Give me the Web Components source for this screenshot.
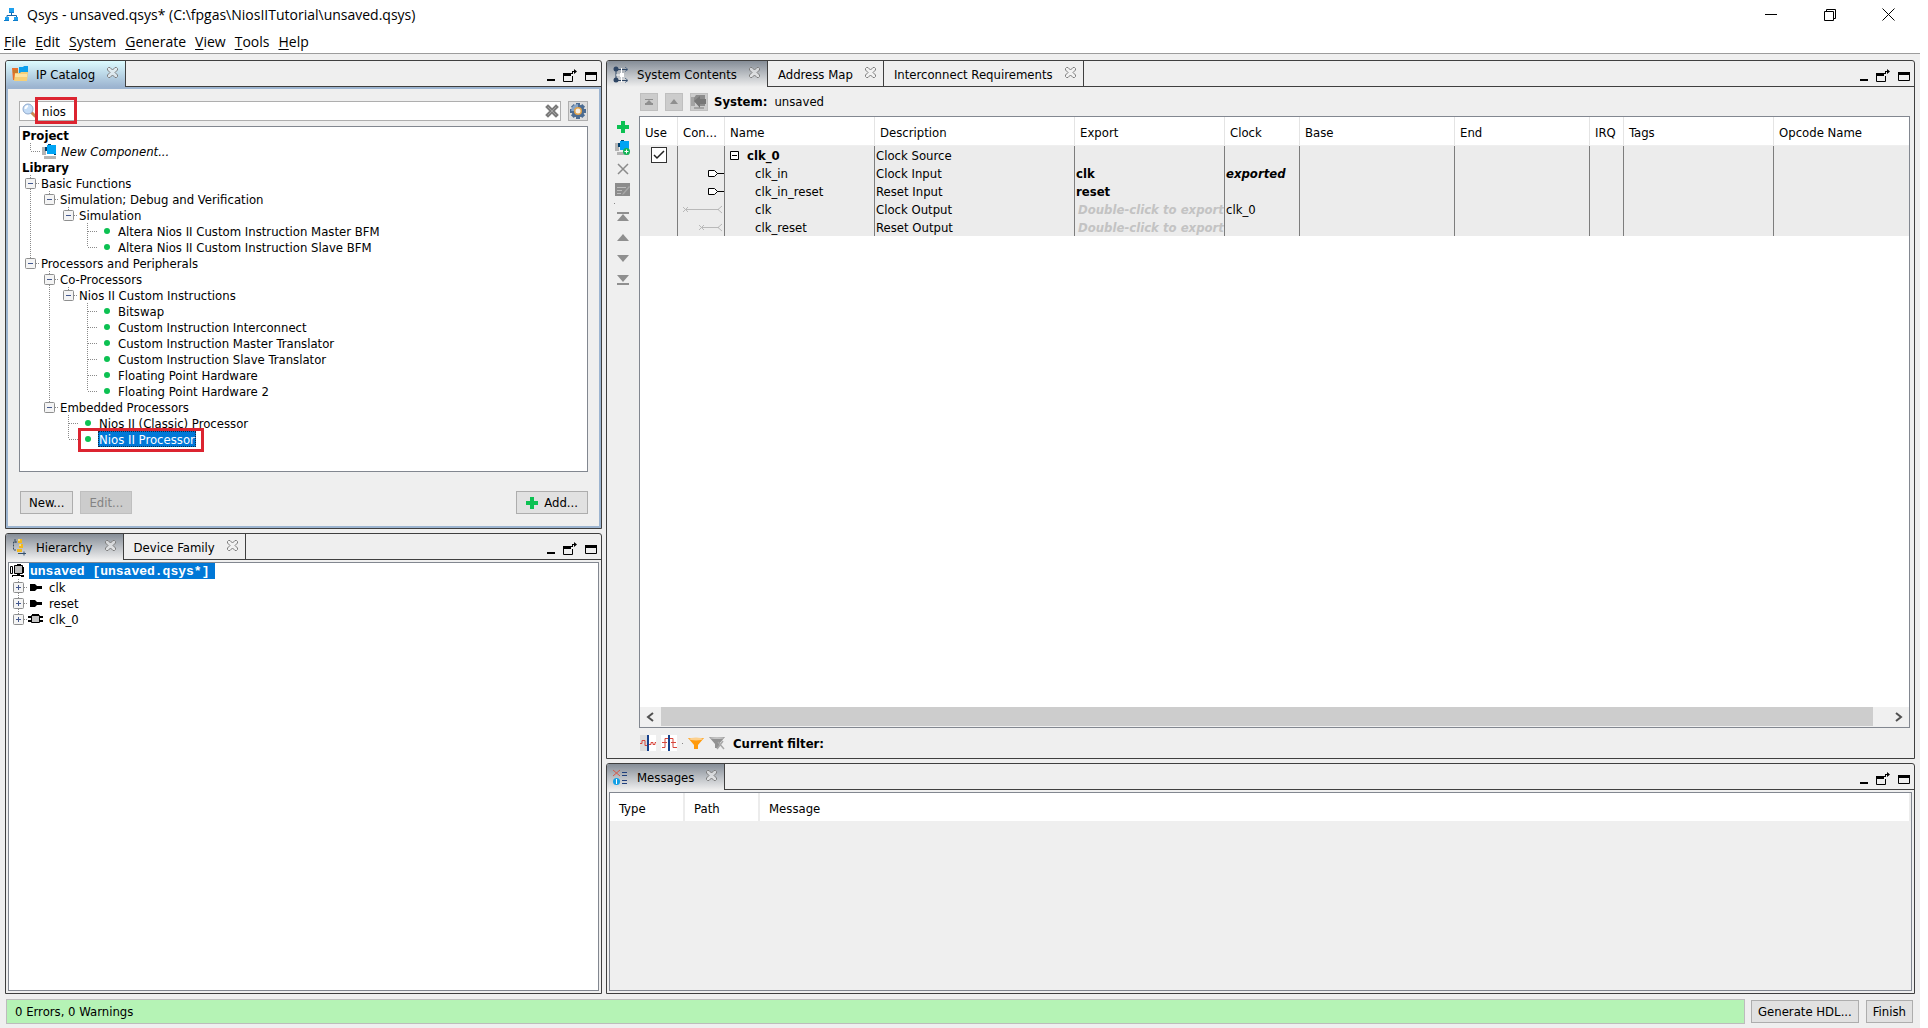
<!DOCTYPE html>
<html lang="en">
<head>
<meta charset="utf-8">
<title>Qsys - unsaved.qsys*</title>
<style>
html,body{height:100%}
body{margin:0;padding-right:8px;box-sizing:border-box;font:13px/16px "DejaVu Sans Condensed","DejaVu Sans",sans-serif;color:#000;background:#fff}
</style>
</head>
<body>
<qsys-app></qsys-app>
<script>
const RESET = `*{box-sizing:border-box}button{font:inherit;color:inherit;margin:0;padding:0;border:0;background:none;display:inline-flex;align-items:center;justify-content:center}`;

/* Registers an element whose shadow root is filled from a render function */
function define(name, css, render) {
  customElements.define(name, class extends HTMLElement {
    constructor() { super(); this.attachShadow({mode: 'open'}); }
    connectedCallback() {
      this.shadowRoot.innerHTML = `<style>${RESET}${css}</style>` + render(this);
    }
  });
}

const DASH = 'stroke="#8a8a8a" stroke-dasharray="1 1" fill="none"';
const CUBES = `<path fill="#b4b4b4" d="M0 3h4v8H0zM2 12h12v3H2z"/><path fill="#00406e" d="M3 3h2v4H3zM12 9h2v2h-2zM6 0h3v2H6z"/><path fill="#00a4f4" d="M5 1h9v9H5z"/>`;
const ICONS = {
  logo: [15, 14, `<path d="M7.500 4v4M3 9V7.500h9.500V9" stroke="#1565a8" fill="none"/><path fill="#1ea0ee" d="M5 0h5v4H5zM1 9h4v3H1zM10 9h4v3h-4z"/><path fill="#0b7dcc" d="M5 4h5v1H5zM0 12h5v1H0zM9 12h5v1H9z"/>`],
  folder: [17, 17, `<path fill="#e8702a" d="M0 2h6v12H1z"/><path fill="#0aa0ee" d="M7 1h4l1 -1h4v7H7z"/><path fill="#c87a2a" d="M1 4h5v3H1z"/><path fill="#f6cf77" d="M2 15L3 7h5l1-1h7l-1 9z"/><path fill="#fbe3a4" d="M3 8h12v3H3z"/>`],
  hier: [15, 16, `<path d="M5 3H1.500v8H4M2 1h2M2 3h2" stroke="#3b4d63" stroke-dasharray="2 1" fill="none"/><path fill="#f2b91e" d="M6 0h4v4H6zM7 5h4v4H7zM5 10h5v3H5z"/><path fill="#f9dc7c" d="M6 0h2v2H6zM7 5h2v2H7z"/><path d="M6 14.500h8M12 12.500v4" stroke="#34506e" fill="none"/>`],
  conn: [17, 17, `<path d="M3 3v12M3 3.500h12M3 14.500h12" stroke="#2f4664" fill="none"/><circle cx="3" cy="3" r="2.500" fill="#2f4664"/><circle cx="3" cy="14" r="2.500" fill="#2f4664"/><path d="M12 1l3 2.500-3 2M12 12l3 2.500-3 2" stroke="#5a6f8a" fill="none"/><path stroke="#fff" d="M8.500 2v14M3 9h8"/><path fill="#fff" d="M7 7h4v4H7z"/>`],
  msgs: [15, 15, `<path d="M0 0l7 6M7 0L0 6" stroke="#d8584a" fill="none"/><circle cx="3.500" cy="11.500" r="3.500" fill="#12a0e6"/><path fill="#fff" d="M3 9h1v5H3z"/><path d="M9 2.500h5M9 5.500h5M9 10.500h5M9 13.500h5" stroke="#1f3f7c"/>`],
  close: [11, 11, `<path fill="#f4f4f4" fill-opacity=".6" stroke="#7d7d7d" d="M.5 1.500l1-1h1.500l2.500 2.500L8 .5h1.500l1 1V3L8 5.500 10.500 8v1.500l-1 1H8L5.500 8 3 10.500H1.500l-1-1V8L3 5.500.5 3z"/>`],
  min: [8, 14, `<path fill="#000" d="M0 10h8v2H0z"/>`],
  detach: [14, 14, `<path fill="#000" d="M0 4h8v3H0z"/><path d="M.5 4v8.500h9V7" fill="none" stroke="#000"/><path fill="#000" d="M7 4h2V2h2V0l3 2.500L11 5V3h-1v2H8z"/>`],
  max: [12, 14, `<path fill="#000" d="M0 3h12v3H0z"/><path d="M.5 3.500h11v8H.5z" fill="none" stroke="#000"/>`],
  winmin: [12, 12, `<path d="M0 5.500h12" stroke="#000"/>`],
  restore: [12, 12, `<path d="M.5 2.500h9v9h-9zM2.500 2V.5h9v9H10" stroke="#000" fill="none"/>`],
  winclose: [13, 13, `<path d="M.5.5l12 12M12.500.5l-12 12" stroke="#000" fill="none"/>`],
  search: [15, 16, `<path d="M9 9l4 4" stroke="#c98a55" stroke-width="3" stroke-linecap="round"/><circle cx="6" cy="6" r="5" fill="#c4dcf6" stroke="#8fa9cc"/><path d="M3.500 6A3 3 0 0 1 6 3" stroke="#fff" fill="none" stroke-width="2"/>`],
  clear: [14, 14, `<path d="M3 3l8 8M11 3l-8 8" stroke="#7c7c7c" stroke-width="4" stroke-linecap="square"/><path d="M3 3l8 8M11 3l-8 8" stroke="#a2a2a2" stroke-width="1"/>`],
  gear: [18, 18, `<g fill="#4c6c92"><circle cx="9" cy="9" r="6.500"/><path d="M7 1h4v16H7zM1 7h16v4H1z"/><path d="M7 1h4v16H7z" transform="rotate(45 9 9)"/><path d="M7 1h4v16H7z" transform="rotate(-45 9 9)"/></g><path d="M9 2a7 7 0 0 0-7 7l7 0z" fill="#88a5c6"/><circle cx="9" cy="9" r="4" fill="#e3a34a"/><circle cx="9" cy="9" r="2.500" fill="#f4efe6"/>`],
  comp: [15, 15, CUBES],
  compadd: [16, 16, CUBES + `<circle cx="11.500" cy="11.500" r="3.500" fill="#12b455"/><path d="M11.500 9.500v4M9.500 11.500h4" stroke="#fff"/>`],
  plus: [12, 12, `<path fill="#0cc152" d="M4 0h4v4h4v4H8v4H4V8H0V4h4z"/>`],
  cross: [12, 12, `<path d="M1 1l10 10M11 1L1 11" stroke="#8b8b8b" stroke-width="1.500"/>`],
  edit: [16, 14, `<path fill="#8c8c8c" d="M0 0h15v13H0z"/><path stroke="#bdbdbd" d="M2 4.500h9M2 7.500h5M2 10.500h4"/><path d="M15 4l-6 7-2 1 1-2 6-7z" fill="#a8a8a8"/>`],
  top: [12, 10, `<path fill="#8f8f8f" d="M0 0h12v2H0zM6 2l6 7H0z"/>`],
  up: [12, 7, `<path fill="#8f8f8f" d="M6 0l6 7H0z"/>`],
  down: [12, 7, `<path fill="#8f8f8f" d="M0 0h12L6 7z"/>`],
  bottom: [12, 10, `<path fill="#8f8f8f" d="M0 0h12L6 7zM0 8h12v2H0z"/>`],
  sTop: [8, 6, `<path fill="#8f8f8f" d="M0 0h8v1H0zM4 1l3 3h1v2H0V4h1z"/>`],
  sUp: [8, 5, `<path fill="#8f8f8f" d="M4 0l4 5H0z"/>`],
  sComp: [16, 16, `<path fill="#a4a4a4" d="M0 3h4v9H0zM3 13h10v2H3z"/><path fill="#8c8c8c" d="M5 1h9v11H8L3 7V4z"/><path fill="#777" d="M3 7l6-5v3h6v5H9v4z"/>`],
  expo: [16, 9, `<path d="M.5 1.500h6l3 3-3 3h-6z" fill="#fff" stroke="#000"/><path d="M9 4.500h7" stroke="#000"/>`],
  outL: [41, 9, `<path d="M0 2l5 5M5 2L0 7M3 4.500h33M39 1l-4 3.500L39 8" stroke="#b9b9b9" fill="none"/>`],
  outS: [25, 9, `<path d="M0 2l5 5M5 2L0 7M3 4.500h17M23 1l-4 3.500L23 8" stroke="#b9b9b9" fill="none"/>`],
  boxminus: [9, 9, `<path d="M.5.5h8v8h-8zM2 4.500h5" stroke="#000" fill="#fff"/>`],
  wave1: [16, 16, `<path fill="#dcdcdc" d="M0 0h7v16H0z"/><path fill="#fff" d="M9 0h7v16H9z"/><path d="M0 8.500h2V5.500h3v5h3M9 9.500h2v-2h2v2h2v-2h1" stroke="#d8473c" fill="none"/><path fill="#16418c" d="M7 0h2v16H7z"/>`],
  wave2: [16, 16, `<path fill="#fff" d="M0 0h16v16H0z"/><path d="M1 12.500h3v-9h8v9h4M1 7.500h5M10 7.500h5" stroke="#d8473c" fill="none"/><path fill="#16418c" d="M7 0h2v16H7z"/>`],
  funnel: [16, 13, `<path fill="#ff9a0c" d="M0 1h16L10 8v4H6V8z"/><ellipse cx="8" cy="2" rx="7" ry="1.500" fill="#fdd08c"/>`],
  funnelx: [16, 14, `<path fill="#929292" d="M0 1h16L10 8v4H6V8z"/><ellipse cx="8" cy="2" rx="7" ry="1" fill="#c4c4c4"/><path d="M8 13l6-8M9 6l6 7" stroke="#a8a8a8" stroke-width="1.500"/>`],
  left: [8, 10, `<path d="M6 1L1 5l5 4" stroke="#505050" stroke-width="2" fill="none"/>`],
  right: [8, 10, `<path d="M1 1l5 4-5 4" stroke="#505050" stroke-width="2" fill="none"/>`],
  system: [16, 14, `<path d="M5.500 1.500h8v8h-8z" fill="#bcbcbc" stroke="#000"/><path d="M1.500 2.500h2v7h-2z" fill="#fff" stroke="#000"/><path fill="#000" d="M8 0h4v2H8zM14 3h1v6h-1zM3 11h12v2H3zM8 9h3v2H8z"/><path fill="#fff" d="M4 12h8v1H4z"/>`],
  port: [14, 7, `<path fill="#000" d="M2 0h5l2 2h5v3H9L7 7H2z"/>`],
  chip: [15, 10, `<path d="M3.500 1.500h8v7h-8z" fill="#c4c4c4" stroke="#000"/><path fill="#000" d="M0 2h4v2H0zM0 6h4v2H0zM11 2h4v2h-4zM11 6h4v2h-4zM4 0h7v2H4z"/>`],
  dot: [6, 6, `<circle cx="3" cy="3" r="3" fill="#0cc152"/>`],
};
define('q-icon', `:host{display:inline-flex;flex:none}svg{display:block;overflow:visible}`, el => {
  const [w, h, body] = ICONS[el.getAttribute('name')];
  return `<svg width="${w}" height="${h}" viewBox="0 0 ${w} ${h}" aria-hidden="true">${body}</svg>`;
});
const icon = n => `<q-icon name="${n}"></q-icon>`;

define('title-bar', `
:host{display:flex;align-items:center;height:29px;padding:0 2px 0 4px;font:14px/20px "Open Sans",sans-serif;background:#fff}
.t{flex:1;padding-left:8px}
button{width:59px;height:28px}`, () => `
${icon('logo')}<span class="t"><slot></slot></span>
<button aria-label="Minimize">${icon('winmin')}</button>
<button aria-label="Restore">${icon('restore')}</button>
<button aria-label="Close">${icon('winclose')}</button>`);

define('menu-bar', `
:host{display:block;background:#fff;border-bottom:1px solid #9c9c9c}
nav{display:flex;gap:9px;height:24px;padding:1px 4px 0;font:14px/20px "Open Sans",sans-serif}
u{text-underline-offset:2px}`, el => `<nav>${el.getAttribute('items').split(',').map(i =>
  `<button><span><u>${i[0]}</u>${i.slice(1)}</span></button>`).join('')}</nav>`);

define('dock-tab', `
:host{display:flex;align-items:center;padding:0 7px 0 10px;border-right:1px solid #3f3f3f;border-bottom:1px solid #3f3f3f;white-space:nowrap}
:host([active]){padding-left:6px;border-bottom:0;background:linear-gradient(#858d97,#efefef)}
:host([active][focused]){background:linear-gradient(#dcfbfe,#9cb4d0)}
.i{width:17px;margin-right:7px;display:flex}
.l{margin-right:12px;padding-top:2px}
button{margin-bottom:3px}`, el => `
${el.hasAttribute('icon') ? `<span class="i">${icon(el.getAttribute('icon'))}</span>` : ''}
<span class="l"><slot></slot></span><button aria-label="Close tab">${icon('close')}</button>`);

define('dock-panel', `
:host{display:flex;flex-direction:column;min-width:0;min-height:0;border:1px solid #3f3f3f;border-radius:3px 3px 0 0;overflow:hidden}
header{display:flex;height:26px;flex:none}
.fill{flex:1;display:flex;align-items:center;justify-content:flex-end;gap:8px;padding:4px 4px 0 0;border-bottom:1px solid #3f3f3f}
.body{flex:1;min-height:0;display:flex;flex-direction:column}
:host([focused]) .body{border:2px solid #9cb4d0}
::slotted([slot=body]){flex:1;min-height:0}`, () => `
<header><slot name="tabs"></slot><div class="fill">
<button aria-label="Minimize panel">${icon('min')}</button>
<button aria-label="Detach panel">${icon('detach')}</button>
<button aria-label="Maximize panel">${icon('max')}</button></div></header>
<div class="body"><slot name="body"></slot></div>`);

/* Guide cells of a tree row: | line, + branch, L last branch, = and - open boxes, # and % closed boxes */
const box = (plus) => `<rect x="4.500" y="3.500" width="10" height="10" rx="1" fill="#f4f4f4" stroke="#8e8f8f"/><path d="M7 8.500h5${plus ? 'M9.500 6v5' : ''}" stroke="#43588f"/><path d="M15 8.500h4" ${DASH}/>`;
const GUIDES = {
  ' ': '',
  '|': `<path d="M9.500 0v16" ${DASH}/>`,
  '+': `<path d="M9.500 0v16M10 8.500h9" ${DASH}/>`,
  'L': `<path d="M9.500 0v8M10 8.500h9" ${DASH}/>`,
  '=': `<path d="M9.500 0v3M9.500 14v2" ${DASH}/>` + box(false),
  '-': `<path d="M9.500 0v3" ${DASH}/>` + box(false),
  '#': `<path d="M9.500 0v3M9.500 14v2" ${DASH}/>` + box(true),
  '%': `<path d="M9.500 0v3" ${DASH}/>` + box(true),
};
define('tree-row', `
:host{display:flex;height:16px;position:relative;width:max-content}
svg{display:block;flex:none}
.i{width:19px;display:flex;align-items:center;justify-content:center;flex:none}
.l{height:16px;line-height:18px;padding:0 1px;white-space:nowrap}
.i+.l{margin-left:1px}
:host([selected]) .l{background:#0078d7;color:#fff;outline:1px dotted #102a44;outline-offset:-1px}
:host([start]) .i,:host([root]) .i{justify-content:flex-start}
:host([root]) .l{background:#0078d7;color:#fff;font:bold 13px/18px "Liberation Mono",monospace;padding-right:6px}
:host([bold]) .l{font-weight:bold}
:host([italic]) .l{font-style:italic}
.mark{position:absolute;inset:-3px -8px -5px 57px;border:3px solid #dc2430}`, el => `
${[...(el.getAttribute('guides') || '')].map(g => `<svg width="19" height="16">${GUIDES[g]}</svg>`).join('')}
${el.hasAttribute('icon') ? `<span class="i">${icon(el.getAttribute('icon'))}</span>` : ''}
<span class="l"><slot></slot></span>${el.hasAttribute('marked') ? '<span class="mark"></span>' : ''}`);

define('ip-catalog', `
:host{display:flex;flex-direction:column;padding:12px 11px}
.search{display:flex;gap:7px;height:20px}
.field{flex:1;display:flex;align-items:center;position:relative;background:#fff;border:1px solid #aeaeae;padding:0 1px 0 2px}
input{flex:1;min-width:0;font:inherit;border:0;outline:0;padding:1px 0 0 5px;background:none}
.mark{position:absolute;left:15px;top:-5px;width:42px;height:27px;border:3px solid #dc2430;pointer-events:none}
.gear{width:20px;background:#dedede;border:1px solid #aeaeae}
.tree{flex:1;min-height:0;margin-top:5px;padding-left:1px;background:#fff;border:1px solid #828790;overflow:hidden}
.acts{display:flex;gap:7px;margin:19px 0 0 1px}
.acts button{height:23px;padding:0 8px;background:#e1e1e1;border:1px solid #adadad}
.acts button:disabled{background:#ccc;border-color:#bfbfbf;color:#838383}
.acts .add{margin-left:auto;gap:6px;padding:0 9px}`, () => {
  const rows = [
    ['', 'Project', 'bold'], ['L', 'New Component...', 'italic icon="comp"'], ['', 'Library', 'bold'],
    ['=', 'Basic Functions'], ['|-', 'Simulation; Debug and Verification'], ['| -', 'Simulation'],
    ['|  +', 'Altera Nios II Custom Instruction Master BFM', 'icon="dot"'],
    ['|  L', 'Altera Nios II Custom Instruction Slave BFM', 'icon="dot"'],
    ['-', 'Processors and Peripherals'], [' =', 'Co-Processors'], [' |-', 'Nios II Custom Instructions'],
    ...['Bitswap', 'Custom Instruction Interconnect', 'Custom Instruction Master Translator',
      'Custom Instruction Slave Translator', 'Floating Point Hardware'].map(t => [' | +', t, 'icon="dot"']),
    [' | L', 'Floating Point Hardware 2', 'icon="dot"'],
    [' -', 'Embedded Processors'], ['  +', 'Nios II (Classic) Processor', 'icon="dot"'],
    ['  L', 'Nios II Processor', 'icon="dot" selected marked'],
  ];
  return `<div class="search"><div class="field">${icon('search')}<input aria-label="Search catalog" value="nios">
<button aria-label="Clear search">${icon('clear')}</button><span class="mark"></span></div>
<button class="gear" aria-label="Options">${icon('gear')}</button></div>
<div class="tree">${rows.map(([g, t, a = '']) => `<tree-row guides="${g}" ${a}>${t}</tree-row>`).join('')}</div>
<div class="acts"><button>New...</button><button disabled>Edit...</button><button class="add">${icon('plus')}Add...</button></div>`;
});

define('system-hierarchy', `
:host{display:flex;padding:2px}
div{flex:1;background:#fff;border:1px solid #828790}`, () => `<div>
<tree-row root icon="system">unsaved [unsaved.qsys*]</tree-row>
<tree-row guides="#" start icon="port">clk</tree-row>
<tree-row guides="#" start icon="port">reset</tree-row>
<tree-row guides="%" start icon="chip">clk_0</tree-row></div>`);

define('system-contents', `
:host{display:grid;grid-template:29px minmax(0,1fr) 30px / 32px minmax(0,1fr);padding-right:4px}
.head{grid-column:2;display:flex;align-items:center;gap:7px;padding-left:1px}
.head button{width:18px;height:18px;background:#ccc;border:1px solid #bfbfbf}
.head b{margin-left:-1px}
.tools{display:flex;flex-direction:column;align-items:center}
.tools button{width:22px;height:21px}
.tools i{width:1px;height:1px;margin:3px 0 2px -18px;background:#888}
.frame{display:flex;flex-direction:column;background:#fff;border:1px solid #828790;min-width:0}
table{width:100%;table-layout:fixed;border-collapse:separate;border-spacing:0}
th{height:29px;padding:3px 0 0 5px;font-weight:normal;text-align:left;border-right:1px solid #e4e4e4;border-bottom:1px solid #efefef;white-space:nowrap}
th:last-child,td:last-child{border-right:0}
td{height:18px;padding:1px 0 0 1px;background:#ececec;border-right:1px solid #7d7d7d;white-space:nowrap;overflow:hidden}
.con{padding:0}.con q-icon{display:flex;justify-content:flex-end}
.use{padding:0;text-align:center}
input{appearance:none;display:block;width:16px;height:16px;margin:0 auto;border:1px solid #333;background:#fff url("data:image/svg+xml,%3Csvg xmlns='http://www.w3.org/2000/svg' width='14' height='14'%3E%3Cpath d='M2 7l3 3 7-7' fill='none' stroke='%23222' stroke-width='1.500'/%3E%3C/svg%3E")}
.nm{display:flex;align-items:center;gap:8px;padding-left:4px}
.sub{padding-left:29px}
.hint{color:#c3c3c3;font-weight:bold;font-style:italic;padding-left:2px}
.em{font-weight:bold;font-style:italic}
.scroll{display:flex;height:20px;margin-top:auto;background:#f0f0f0}
.scroll button{width:21px}
.track{flex:1;padding-right:15px}.thumb{height:19px;background:#cdcdcd}
.foot{grid-column:2;display:flex;align-items:center;gap:5px;padding-left:1px}
.foot i{width:1px;height:1px;background:#888}
.foot b{margin-left:3px;padding-top:2px}`, () => {
  const cols = [['Use', 38], ['Con...', 47], ['Name', 150], ['Description', 200], ['Export', 150], ['Clock', 75],
    ['Base', 155], ['End', 135], ['IRQ', 34], ['Tags', 150], ['Opcode Name', 0]];
  const rows = [
    ['<td class="use"><input type="checkbox" checked aria-label="Use clk_0"></td>', '', `<div class="nm">${icon('boxminus')}<b>clk_0</b></div>`, 'Clock Source', '', ''],
    ['', 'expo', '<div class="sub">clk_in</div>', 'Clock Input', '<b>clk</b>', '<span class="em">exported</span>'],
    ['', 'expo', '<div class="sub">clk_in_reset</div>', 'Reset Input', '<b>reset</b>', ''],
    ['', 'outL', '<div class="sub">clk</div>', 'Clock Output', '<span class="hint">Double-click to export</span>', 'clk_0'],
    ['', 'outS', '<div class="sub">clk_reset</div>', 'Reset Output', '<span class="hint">Double-click to export</span>', ''],
  ];
  return `<div class="head"><button disabled aria-label="Go to top">${icon('sTop')}</button><button disabled aria-label="Go up">${icon('sUp')}</button>
<button disabled aria-label="Open component">${icon('sComp')}</button><b>System:</b><span>unsaved</span></div>
<div class="tools"><button aria-label="Add">${icon('plus')}</button><button aria-label="New component">${icon('compadd')}</button>
<button aria-label="Remove">${icon('cross')}</button><button aria-label="Edit">${icon('edit')}</button><i></i>
<button aria-label="Move to top">${icon('top')}</button><button aria-label="Move up">${icon('up')}</button>
<button aria-label="Move down">${icon('down')}</button><button aria-label="Move to bottom">${icon('bottom')}</button></div>
<div class="frame"><table><colgroup>${cols.map(c => c[1] ? `<col style="width:${c[1]}px">` : '<col>').join('')}</colgroup>
<thead><tr>${cols.map(c => `<th>${c[0]}</th>`).join('')}</tr></thead>
<tbody>${rows.map(([u, c, ...r]) => `<tr>${u || '<td></td>'}<td class="con">${c ? icon(c) : ''}</td>${r.map(x => `<td>${x}</td>`).join('')}${'<td></td>'.repeat(5)}</tr>`).join('')}</tbody></table>
<div class="scroll"><button aria-label="Scroll left">${icon('left')}</button><div class="track"><div class="thumb"></div></div><button aria-label="Scroll right">${icon('right')}</button></div></div>
<div class="foot">${icon('wave1')}${icon('wave2')}<i></i>${icon('funnel')}${icon('funnelx')}<b>Current filter:</b></div>`;
});

define('message-list', `
:host{display:flex;padding:2px}
div{flex:1;border:1px solid #828790}
table{width:100%;table-layout:fixed;border-spacing:0;background:#fff}
th{height:28px;padding:3px 0 0 9px;font-weight:normal;text-align:left;border-right:2px solid #ececec}
`, () => `<div><table><colgroup><col style="width:75px"><col style="width:75px"><col></colgroup>
<thead><tr><th>Type</th><th>Path</th><th>Message</th></tr></thead></table></div>`);

define('status-bar', `
:host{display:flex;align-items:center;padding:5px 7px 4px 6px}
.s{flex:1;height:25px;line-height:23px;padding-left:8px;background:#b5f3b5;border:1px solid #bcbcbc;margin-right:6px}
button{height:23px;padding:0 6px;background:#e1e1e1;border:1px solid #adadad}
button+button{margin-left:7px}`, () => `<div class="s" role="status"><slot></slot></div><button>Generate HDL...</button><button>Finish</button>`);

define('qsys-app', `
:host{display:flex;flex-direction:column;height:100vh;min-height:600px;background:#efefef}
main{flex:1;min-height:0;display:grid;grid-template-columns:597fr 1309fr;gap:4px;padding:6px 5px 0}
section{display:grid;gap:4px;min-width:0;min-height:0}
.l{grid-template-rows:469fr 461fr}
.r{grid-template-rows:699fr 231fr}`, () => `
<title-bar>Qsys - unsaved.qsys* (C:\\fpgas\\NiosIITutorial\\unsaved.qsys)</title-bar>
<menu-bar items="File,Edit,System,Generate,View,Tools,Help"></menu-bar>
<main>
<section class="l">
<dock-panel focused><dock-tab slot="tabs" active focused icon="folder">IP Catalog</dock-tab><ip-catalog slot="body"></ip-catalog></dock-panel>
<dock-panel><dock-tab slot="tabs" active icon="hier">Hierarchy</dock-tab><dock-tab slot="tabs">Device Family</dock-tab><system-hierarchy slot="body"></system-hierarchy></dock-panel>
</section>
<section class="r">
<dock-panel><dock-tab slot="tabs" active icon="conn">System Contents</dock-tab><dock-tab slot="tabs">Address Map</dock-tab><dock-tab slot="tabs">Interconnect Requirements</dock-tab><system-contents slot="body"></system-contents></dock-panel>
<dock-panel><dock-tab slot="tabs" active icon="msgs">Messages</dock-tab><message-list slot="body"></message-list></dock-panel>
</section>
</main>
<status-bar>0 Errors, 0 Warnings</status-bar>`);
</script>
</body>
</html>
